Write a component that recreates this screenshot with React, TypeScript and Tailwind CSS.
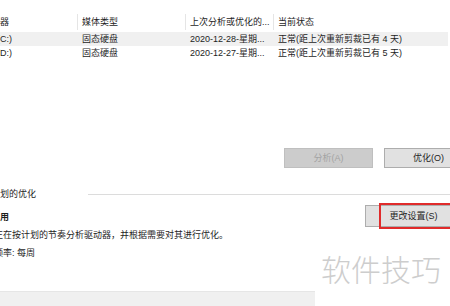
import React from "react";

const FONT = "font-['Liberation_Sans','Noto_Sans_CJK_SC',sans-serif]";

const DRIVES = [
  { name: "(C:)", media: "固态硬盘", last: "2020-12-28-星期...", status: "正常(距上次重新剪裁已有 4 天)", hover: true },
  { name: "(D:)", media: "固态硬盘", last: "2020-12-27-星期...", status: "正常(距上次重新剪裁已有 5 天)", hover: false },
];

function Cell({ w, children, sep = false }: { w: string; children: React.ReactNode; sep?: boolean }) {
  return (
    <div className={`${w} flex h-full shrink-0 items-center overflow-hidden whitespace-nowrap pl-[4px] ${sep ? "border-l border-[#e5e5e5]" : "border-l border-transparent"}`}>
      {children}
    </div>
  );
}

export default function App() {
  return (
    <div className={`relative flex h-[306px] w-[450px] flex-col overflow-hidden bg-white text-[9px] leading-[12px] text-[#1e1e1e] ${FONT}`}>
      <div className="h-[14px]" />

      {/* list header */}
      <div className="flex h-[16px] items-center">
        <div className="flex h-full w-[77px] shrink-0 items-center overflow-hidden whitespace-nowrap">
          <span className="-ml-[18px]">驱动器</span>
        </div>
        <Cell w="w-[108px]" sep>媒体类型</Cell>
        <Cell w="w-[88px]" sep>上次分析或优化的...</Cell>
        <Cell w="w-[177px]" sep>当前状态</Cell>
      </div>
      <div className="h-[2px]" />

      {DRIVES.map((d) => (
        <div key={d.name} className={`flex h-[14px] w-[448px] items-center ${d.hover ? "bg-[#f0f0f0]" : ""}`}>
          <div className="flex h-full w-[77px] shrink-0 items-center overflow-hidden whitespace-nowrap">
            <span className="-ml-[3px]">{d.name}</span>
          </div>
          <Cell w="w-[108px]">{d.media}</Cell>
          <Cell w="w-[88px]">{d.last}</Cell>
          <Cell w="w-[175px]">{d.status}</Cell>
        </div>
      ))}

      <div className="h-[88px]" />

      {/* analyze / optimize */}
      <div className="flex h-[20px] justify-end gap-[11px] -mr-[23px]">
        <button className="w-[89px] border border-[#bfbfbf] bg-[#cccccc] text-[#a3a3a3]">分析(A)</button>
        <button className="w-[89px] border border-[#adadad] bg-[#e1e1e1] text-[#1e1e1e]">优化(O)</button>
      </div>

      <div className="h-[20px]" />

      {/* scheduled optimization */}
      <div className="flex h-[12px] items-center">
        <span className="w-[88px] shrink-0">划的优化</span>
        <div className="h-px flex-1 bg-[#dcdcdc]" />
      </div>

      <div className="h-[3px]" />

      <div className="flex justify-between">
        <div className="flex flex-col">
          <div className="mt-[8px] font-bold">用</div>
          <div className="mt-[6px] -ml-[6px] whitespace-nowrap">正在按计划的节奏分析驱动器，并根据需要对其进行优化。</div>
          <div className="mt-[6px] -ml-[6px] whitespace-nowrap">频率: 每周</div>
        </div>
        <button className="mt-[2px] -mr-[4px] h-[22px] w-[89px] border border-[#adadad] bg-[#e1e1e1] pl-[8px] text-[#1e1e1e]">
          更改设置(S)
        </button>
      </div>

      {/* red annotation box */}
      <div className="absolute left-[379px] top-[203px] h-[26px] w-[74px] border-2 border-[#e02b2b]" />

      {/* watermark */}
      <div className="absolute left-[321px] top-[250px] font-['Noto_Sans_CJK_SC',sans-serif] text-[30px] font-light leading-[36px] text-[#cdcdcd]">
        软件技巧
      </div>

      <div className="mt-auto h-[15px] w-[315px] border-t border-[#e6e6e6] bg-[#f0f0f0]" />
    </div>
  );
}
